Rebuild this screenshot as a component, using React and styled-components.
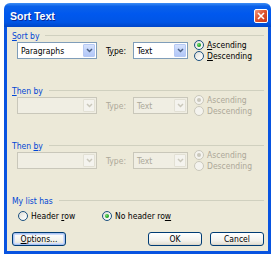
import React from 'react'
import styled, { createGlobalStyle } from 'styled-components'

const GlobalStyle = createGlobalStyle`
  html, body {
    margin: 0;
    padding: 0;
    background: #ffffff;
  }
  body {
    font-family: "DejaVu Sans Condensed", "Liberation Sans", sans-serif;
    font-size: 8.5px;
  }
`

const Window = styled.div`
  margin: 3px 0 0 4px;
  width: 267px;
  height: 251px;
  display: flex;
  flex-direction: column;
`

const TitleBar = styled.div`
  height: 24px;
  flex: none;
  display: flex;
  align-items: center;
  justify-content: space-between;
  padding: 0 3px 0 6px;
  border-radius: 6px 6px 0 0;
  background: linear-gradient(
    to bottom,
    #3d8df5 0%,
    #0b61e9 14%,
    #0058ee 45%,
    #0055e5 80%,
    #0046c8 100%
  );
`

const TitleText = styled.span`
  font-family: "Liberation Sans", Arial, sans-serif;
  font-weight: bold;
  font-size: 10.5px;
  color: #ffffff;
  text-shadow: 1px 1px 0 #0a2a9a;
  margin-top: 1px;
`

const CloseButton = styled.div`
  width: 12px;
  height: 12px;
  border: 1px solid #ffffff;
  border-radius: 2px;
  background: linear-gradient(135deg, #f29a80 0%, #e0552f 45%, #c8381c 100%);
  display: flex;
  align-items: center;
  justify-content: center;
  margin-top: 1px;
`

const Body = styled.div`
  flex: 1;
  background: #ece9d8;
  border: 3px solid #0853e0;
  border-top: none;
  padding: 3px 4px 0 5px;
  display: flex;
  flex-direction: column;
`

const Section = styled.div`
  display: flex;
  flex-direction: column;
  margin-bottom: ${p => p.$last ? 8 : 26}px;
`

const GroupHeader = styled.div`
  height: 12px;
  display: flex;
  align-items: center;
  color: #0046d5;
  line-height: 12px;
`

const GroupLine = styled.div`
  flex: 1;
  height: 1px;
  margin: 0 0 2px 6px;
  background: #d0d0bf;
`

const Row = styled.div`
  height: 17px;
  display: flex;
  align-items: center;
  padding-left: 5px;
`

const Combo = styled.div`
  box-sizing: border-box;
  width: ${p => p.$width}px;
  height: 17px;
  border: 1px solid ${p => p.$disabled ? '#c9c7ba' : '#7f9db9'};
  background: ${p => p.$disabled ? '#f0eee3' : '#ffffff'};
  display: flex;
  align-items: center;
  padding: 1px;
`

const ComboText = styled.span`
  flex: 1;
  padding-left: 2px;
  color: ${p => p.$disabled ? '#aca899' : '#000000'};
  white-space: nowrap;
  overflow: hidden;
`

const DropButton = styled.div`
  box-sizing: border-box;
  width: 12px;
  height: 13px;
  border: 1px solid ${p => p.$disabled ? '#e2e0d4' : '#b6c9f4'};
  border-radius: 1px;
  background: ${p => p.$disabled
    ? '#f4f3ee'
    : 'linear-gradient(to bottom, #d6e2fc 0%, #c1d3fb 50%, #b2c7f7 100%)'};
  display: flex;
  align-items: center;
  justify-content: center;
`

const FieldLabel = styled.span`
  width: 27px;
  margin-left: 9px;
  color: ${p => p.$disabled ? '#aca899' : '#000000'};
`

const RadioGroup = styled.div`
  display: flex;
  flex-direction: column;
  margin-left: 6px;
`

const RadioItem = styled.div`
  height: 11px;
  display: flex;
  align-items: center;
  width: ${p => p.$width ? `${p.$width}px` : 'auto'};
`

const RadioCircle = styled.span`
  box-sizing: border-box;
  width: 10px;
  height: 10px;
  flex: none;
  border-radius: 50%;
  border: 1px solid ${p => p.$disabled ? '#cac8bb' : '#1c5180'};
  background: ${p => p.$disabled
    ? '#f4f3ee'
    : 'linear-gradient(135deg, #dcdcd7 0%, #f5f5f2 60%, #ffffff 100%)'};
  display: flex;
  align-items: center;
  justify-content: center;

  &::after {
    content: '';
    display: ${p => p.$checked ? 'block' : 'none'};
    width: 4px;
    height: 4px;
    border-radius: 50%;
    background: ${p => p.$disabled
      ? '#cac8bb'
      : 'radial-gradient(circle at 35% 35%, #6fe06f 0%, #21a121 60%, #1a8a1a 100%)'};
  }
`

const RadioLabel = styled.span`
  margin-left: 3px;
  color: ${p => p.$disabled ? '#aca899' : '#000000'};
  white-space: nowrap;
`

const ListRow = styled.div`
  height: 17px;
  display: flex;
  align-items: center;
  padding-left: 6px;
`

const ButtonBar = styled.div`
  display: flex;
  align-items: center;
  gap: 8px;
`

const Spacer = styled.div`
  flex: 1;
`

const Button = styled.div`
  box-sizing: border-box;
  width: 54px;
  height: 14px;
  border: 1px solid #003c74;
  border-radius: 3px;
  background: linear-gradient(to bottom, #ffffff 0%, #f4f3ee 60%, #e6e3d8 90%, #d6d0c5 100%);
  box-shadow: ${p => p.$focused ? 'inset 0 0 0 1px #a9c2f2, inset 0 0 0 2px #cddbfa' : 'none'};
  display: flex;
  align-items: center;
  justify-content: center;
  color: #000000;
  line-height: 12px;
`

const Chevron = ({ disabled }) => (
  <svg width="7" height="5" viewBox="0 0 7 5">
    <path d="M1 1 L3.5 3.5 L6 1" fill="none" stroke={disabled ? '#c9c7ba' : '#4d6185'} strokeWidth="1.5" />
  </svg>
)

const ComboBox = ({ width, value, disabled }) => (
  <Combo $width={width} $disabled={disabled}>
    <ComboText $disabled={disabled}>{value}</ComboText>
    <DropButton $disabled={disabled}>
      <Chevron disabled={disabled} />
    </DropButton>
  </Combo>
)

const Radio = ({ checked, disabled, width, children }) => (
  <RadioItem $width={width}>
    <RadioCircle $checked={checked} $disabled={disabled} />
    <RadioLabel $disabled={disabled}>{children}</RadioLabel>
  </RadioItem>
)

const SortRow = ({ label, value, disabled, typeLabel }) => (
  <Section>
    <GroupHeader>
      <span>{label}</span>
      <GroupLine />
    </GroupHeader>
    <Row>
      <ComboBox width={80} value={value} disabled={disabled} />
      <FieldLabel $disabled={disabled}>{typeLabel}</FieldLabel>
      <ComboBox width={55} value="Text" disabled={disabled} />
      <RadioGroup>
        <Radio checked disabled={disabled}>
          {disabled ? 'Ascending' : <><u>A</u>scending</>}
        </Radio>
        <Radio disabled={disabled}>
          {disabled ? 'Descending' : <><u>D</u>escending</>}
        </Radio>
      </RadioGroup>
    </Row>
  </Section>
)

export default function App() {
  return (
    <>
      <GlobalStyle />
      <Window>
        <TitleBar>
          <TitleText>Sort Text</TitleText>
          <CloseButton>
            <svg width="8" height="8" viewBox="0 0 8 8">
              <path d="M1 1 L7 7 M7 1 L1 7" stroke="#ffffff" strokeWidth="1.6" />
            </svg>
          </CloseButton>
        </TitleBar>
        <Body>
          <SortRow
            label={<><u>S</u>ort by</>}
            value="Paragraphs"
            typeLabel={<>T<u>y</u>pe:</>}
          />
          <SortRow label={<><u>T</u>hen by</>} value="" disabled typeLabel="Type:" />
          <SortRow label={<>Then <u>b</u>y</>} value="" disabled typeLabel="Type:" />
          <Section $last>
            <GroupHeader>
              <span>My list has</span>
              <GroupLine />
            </GroupHeader>
            <ListRow>
              <Radio width={84}>Header <u>r</u>ow</Radio>
              <Radio checked>No header ro<u>w</u></Radio>
            </ListRow>
          </Section>
          <ButtonBar>
            <Button $focused><span><u>O</u>ptions...</span></Button>
            <Spacer />
            <Button>OK</Button>
            <Button>Cancel</Button>
          </ButtonBar>
        </Body>
      </Window>
    </>
  )
}
